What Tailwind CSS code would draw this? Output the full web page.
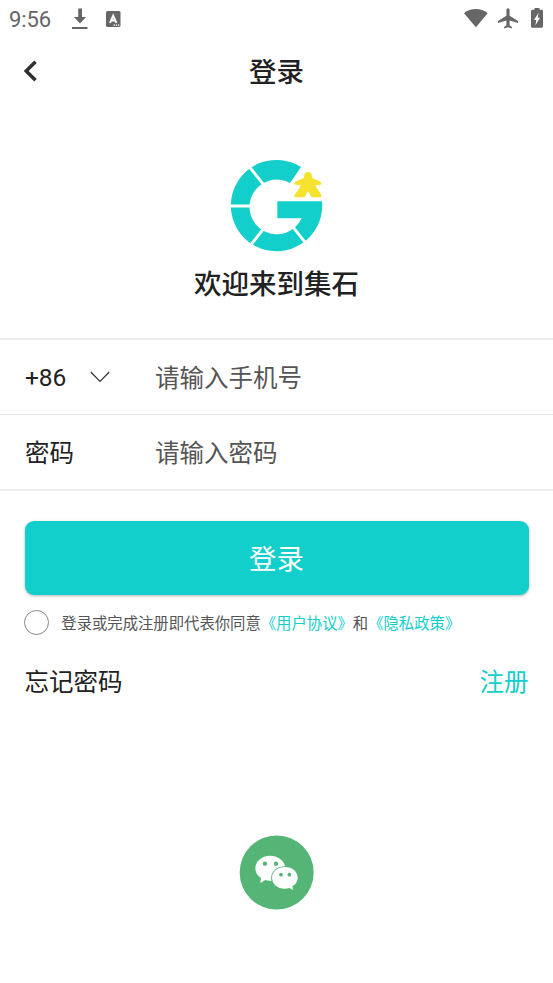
<!DOCTYPE html>
<html lang="zh-CN">
<head>
<meta charset="utf-8">
<title>登录</title>
<script src="https://cdn.jsdelivr.net/npm/@tailwindcss/browser@4"></script>
</head>
<body class="w-[553px] h-[983px] overflow-hidden bg-white flex flex-col text-[#212121] font-[Roboto,'Noto_Sans_CJK_SC',sans-serif]">
  <div class="h-[38px] shrink-0 flex items-center justify-between pl-[9px] pr-[10px] text-[#666]">
    <div class="flex items-center">
      <span class="w-[62px] text-[22px] leading-[38px] tracking-[-0.1px] pt-px">9:56</span>
      <svg class="w-[18px] h-[22px] shrink-0" viewBox="0 0 18 22" fill="currentColor"><path d="M7.200 .5h3.800v8.500h4L9 15.500 3 9h4.200zM1 19h15.500v2H1z"/></svg>
      <svg class="w-4 h-4 ml-4 shrink-0 -mt-px" viewBox="0 0 16 16"><rect x="1" y="0" width="14.500" height="16" rx="1.500" fill="currentColor"/><path d="M5 11.800 8.200 4.600l3.200 7.200M6 9.600h4.500" fill="none" stroke="#fff" stroke-width="2"/><path d="M8.500 13.500H10v1.300H8.500zm2.300 0h1.400v1.300h-1.400zm2.200 0h1.300v1.300H13z" fill="#fff"/></svg>
    </div>
    <svg class="w-[80px] h-[24px]" viewBox="463 7 80 24" fill="currentColor">
      <path d="M464 13.200C470.500 7.700 481 7.700 487.700 13.200L475.900 27.200Z"/>
      <path d="M508 8.200c1 0 1.600.8 1.600 1.900v5.700l8.400 5.100v2.200l-8.400-2.600v4.700l2.300 1.700v1.500l-3.900-1.100-3.900 1.100v-1.500l2.300-1.700v-4.700l-8.400 2.600v-2.200l8.400-5.100v-5.700c0-1.100.6-1.900 1.600-1.900z"/>
      <path d="M534.500 8h5v1.800h2c.9 0 1.500.6 1.500 1.500v15c0 .9-.6 1.500-1.500 1.500h-9c-.9 0-1.500-.6-1.500-1.500v-15c0-.9.600-1.500 1.500-1.500h2z"/>
      <path d="M538.600 12.500 534 20h2.300l-.9 5.600 4.600-7.800h-2.300z" fill="#fff"/>
    </svg>
  </div>
  <header class="h-[66px] shrink-0 grid grid-cols-[80px_1fr_80px] items-center">
    <svg class="w-[16px] h-[24px] ml-[22px]" viewBox="0 0 16 24" fill="none" stroke="#303030" stroke-width="3.500"><path d="M13.500 2.700 4.200 12l9.300 9.300"/></svg>
    <h1 class="text-center text-[27.500px] leading-[40px] font-medium pt-[3px]">登录</h1>
  </header>
  <main class="flex flex-col">
    <section class="h-[234px] pt-[55px] flex flex-col items-center">
      <svg class="w-[93px] h-[93px] shrink-0" viewBox="29 26 279 279">
        <path d="M171 153H305A137 137 0 1 1 242 50L209 98A82 82 0 1 0 244 204H171Z" fill="#12cfcb"/>
        <path d="M90 53 129 102M30 167H95M92 283 130 235M217 229 255 277" stroke="#fff" stroke-width="8.500"/>
        <path d="M251 78C251 61 275 61 275 78Q275 83 277 84L298 93Q304 96 303 101Q302 104 297 104H286Q287 112 301 130Q305 136 303 141H274L263 123 252 141H222Q220 136 226 129Q239 114 240 104H229Q222 104 222 99Q222 95 228 93L249 84Q251 83 251 78Z" fill="#f5e32f"/>
      </svg>
      <h2 class="mt-[13px] text-[27.500px] leading-[40px] font-medium">欢迎来到集石</h2>
    </section>
    <section class="border-t-2 border-[#ededed] text-[24.500px]">
      <div class="h-[75px] flex items-center pl-[25px] border-b border-[#e8e8e8]">
        <span class="w-[65px] pt-[2px] tracking-[-0.1px]">+86</span>
        <svg class="w-[20px] h-[12px] mr-[45px]" viewBox="0 0 20 12" fill="none" stroke="#333" stroke-width="1.200"><path d="m.8 1 9.200 9.500L19.200 1"/></svg>
        <span class="text-[#555] pt-[4px]">请输入手机号</span>
      </div>
      <div class="h-[76px] flex items-center pl-[25px] border-b-2 border-[#ededed]">
        <span class="w-[130px] pt-[4px]">密码</span>
        <span class="text-[#555] pt-[4px]">请输入密码</span>
      </div>
    </section>
    <section class="px-[24.500px] pt-[30px]">
      <button class="block w-full h-[74px] pt-[3px] rounded-[9px] bg-[#12cfcb] text-white text-[27.500px] shadow-[0_1px_3px_rgba(0,0,0,.3)]">登录</button>
      <div class="mt-[14px] h-[26px] flex items-center text-[15.350px] text-[#555]">
        <span class="w-[25px] h-[25px] rounded-full border border-[#888] -ml-[0.5px] mr-[11.500px] shrink-0"></span>
        <p class="whitespace-nowrap pl-[0.8px] leading-[24px] font-['Noto_Sans_CJK_SC',sans-serif]">登录或完成注册即代表你同意<span class="text-[#12cfcb]">《用户协议》</span>和<span class="text-[#12cfcb]">《隐私政策》</span></p>
      </div>
      <div class="mt-[28px] h-[36px] pt-[4px] flex items-center justify-between text-[24.500px]">
        <a>忘记密码</a><a class="text-[#12cfcb]">注册</a>
      </div>
    </section>
    <button class="mt-[136px] self-center">
      <svg class="w-[75px] h-[75px]" viewBox="27 28 225 225">
        <circle cx="140" cy="140.500" r="111" fill="#55b577"/>
        <path d="M120 90C95 90 76 107 76 128C76 140 82 150 93 157L91 172 106 163Q114 166 125 165C150 164 166 148 166 128C166 107 145 90 120 90Z" fill="#fff"/>
        <path d="M165 124C143 124 126 138 126 156C126 175 143 189 165 189Q172 189 178 187L189 193 187 182Q203 172 203 156C203 138 187 124 165 124Z" fill="#fff" stroke="#55b577" stroke-width="5" paint-order="stroke"/>
        <g fill="#55b577"><circle cx="105" cy="114" r="6.500"/><circle cx="138" cy="114" r="6.500"/><circle cx="153" cy="147" r="5.500"/><circle cx="178" cy="147" r="5.500"/></g>
      </svg>
    </button>
  </main>
</body>
</html>
